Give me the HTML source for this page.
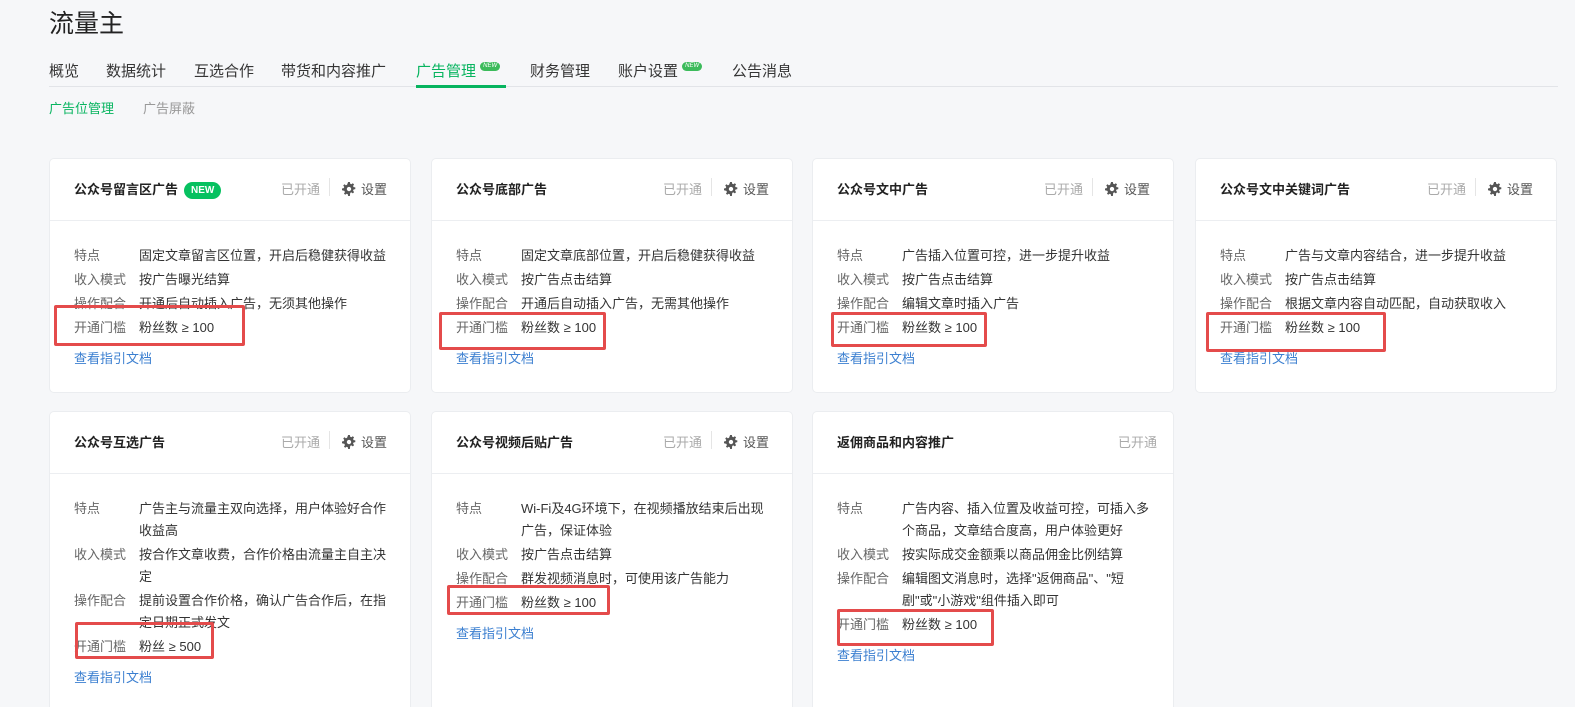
<!DOCTYPE html>
<html style="width:1575px;height:707px;overflow:hidden"><head><meta charset="utf-8"><style>
*{box-sizing:border-box;margin:0;padding:0}
body{width:1575px;height:707px;overflow:hidden;background:#f6f7f9;font-family:"Liberation Sans","Noto Sans CJK SC",sans-serif;color:#333;position:relative}
.h1{position:absolute;left:49px;top:4px;font-size:25px;color:#222}
.nav{position:absolute;left:49px;top:60px;font-size:15px;color:#353535;white-space:nowrap}
.nav span{position:absolute;top:0}
.navline{position:absolute;left:49px;right:17px;top:86px;height:1px;background:#e2e4e8}
.act{color:#07b45f}
.bar{position:absolute;left:416px;top:85px;width:90px;height:3px;background:#07b45f}
.new{display:inline-block;background:#3cbb5b;color:#fff;font-size:6px;border-radius:5px;padding:0 3px;line-height:9px;vertical-align:top;margin-top:2px}
.sub{position:absolute;top:98px;font-size:13px}
.card{position:absolute;width:362px;background:#fff;border-radius:5px;border:1px solid #ebedf0;overflow:hidden}
.hd{height:62px;border-bottom:1px solid #eceef1;position:relative}
.t{position:absolute;left:24px;top:20px;font-size:13px;font-weight:bold;color:#222}
.badge{display:inline-block;background:#07c160;color:#fff;font-size:10px;font-weight:bold;border-radius:9px;padding:0 7px;line-height:17px;margin-left:6px;vertical-align:1px}
.st{position:absolute;right:90px;top:20px;font-size:13px;color:#aaa}
.st.only{right:16px}
.sep{position:absolute;right:80px;top:19px;width:1px;height:18px;background:#e5e5e5}
.set{position:absolute;right:23px;top:20px;font-size:13px;color:#555}
.set svg{vertical-align:-2px;margin-right:5px}
.bd{padding:24px 24px 0 24px;font-size:13px}
.r{display:flex;line-height:22px;margin-bottom:2px}
.r .l{width:65px;flex:none;color:#666}
.r .v{color:#333}
.lk{color:#3b7fd0;font-size:13px;margin-top:9px;line-height:22px}
.red{position:absolute;border:3px solid #e44b4b;border-radius:2px}
</style></head><body>
<div class="h1">流量主</div>
<div class="nav">
<span style="left:0">概览</span>
<span style="left:57px">数据统计</span>
<span style="left:145px">互选合作</span>
<span style="left:232px">带货和内容推广</span>
<span style="left:367px" class="act">广告管理 <i class="new">NEW</i></span>
<span style="left:481px">财务管理</span>
<span style="left:569px">账户设置 <i class="new">NEW</i></span>
<span style="left:683px">公告消息</span>
</div>
<div class="navline"></div><div class="bar"></div>
<div class="sub act" style="left:49px">广告位管理</div>
<div class="sub" style="left:143px;color:#999">广告屏蔽</div>

<svg width="0" height="0" style="position:absolute"><defs><g id="gear"><path fill="#555" d="M7 0h2l.4 2a5 5 0 011.3.6l1.7-1.2 1.4 1.4-1.2 1.7a5 5 0 01.6 1.3l2 .4v2l-2 .4a5 5 0 01-.6 1.3l1.2 1.7-1.4 1.4-1.7-1.2a5 5 0 01-1.3.6L9 16H7l-.4-2a5 5 0 01-1.3-.6l-1.7 1.2-1.4-1.4 1.2-1.7A5 5 0 012.8 10.2L0 9.4V7.4l2-.4a5 5 0 01.6-1.3L1.4 4 2.8 2.6l1.7 1.2A5 5 0 015.8 3.2zM8 5.5a2.5 2.5 0 100 5 2.5 2.5 0 000-5z"/></g></defs></svg>

<div class="card" style="left:49px;top:158px;height:235px"><div class="hd"><div class="t">公众号留言区广告<span class="badge">NEW</span></div><div class="st">已开通</div><div class="sep"></div><div class="set"><svg width="14" height="14" viewBox="0 0 16 16"><use href="#gear"/></svg>设置</div></div>
<div class="bd"><div class="r"><span class="l">特点</span><span class="v">固定文章留言区位置，开启后稳健获得收益</span></div><div class="r"><span class="l">收入模式</span><span class="v">按广告曝光结算</span></div><div class="r"><span class="l">操作配合</span><span class="v">开通后自动插入广告，无须其他操作</span></div><div class="r"><span class="l">开通门槛</span><span class="v">粉丝数 ≥ 100</span></div><div class="lk">查看指引文档</div></div></div>

<div class="card" style="left:431px;top:158px;height:235px"><div class="hd"><div class="t">公众号底部广告</div><div class="st">已开通</div><div class="sep"></div><div class="set"><svg width="14" height="14" viewBox="0 0 16 16"><use href="#gear"/></svg>设置</div></div>
<div class="bd"><div class="r"><span class="l">特点</span><span class="v">固定文章底部位置，开启后稳健获得收益</span></div><div class="r"><span class="l">收入模式</span><span class="v">按广告点击结算</span></div><div class="r"><span class="l">操作配合</span><span class="v">开通后自动插入广告，无需其他操作</span></div><div class="r"><span class="l">开通门槛</span><span class="v">粉丝数 ≥ 100</span></div><div class="lk">查看指引文档</div></div></div>

<div class="card" style="left:812px;top:158px;height:235px"><div class="hd"><div class="t">公众号文中广告</div><div class="st">已开通</div><div class="sep"></div><div class="set"><svg width="14" height="14" viewBox="0 0 16 16"><use href="#gear"/></svg>设置</div></div>
<div class="bd"><div class="r"><span class="l">特点</span><span class="v">广告插入位置可控，进一步提升收益</span></div><div class="r"><span class="l">收入模式</span><span class="v">按广告点击结算</span></div><div class="r"><span class="l">操作配合</span><span class="v">编辑文章时插入广告</span></div><div class="r"><span class="l">开通门槛</span><span class="v">粉丝数 ≥ 100</span></div><div class="lk">查看指引文档</div></div></div>

<div class="card" style="left:1195px;top:158px;height:235px"><div class="hd"><div class="t">公众号文中关键词广告</div><div class="st">已开通</div><div class="sep"></div><div class="set"><svg width="14" height="14" viewBox="0 0 16 16"><use href="#gear"/></svg>设置</div></div>
<div class="bd"><div class="r"><span class="l">特点</span><span class="v">广告与文章内容结合，进一步提升收益</span></div><div class="r"><span class="l">收入模式</span><span class="v">按广告点击结算</span></div><div class="r"><span class="l">操作配合</span><span class="v">根据文章内容自动匹配，自动获取收入</span></div><div class="r"><span class="l">开通门槛</span><span class="v">粉丝数 ≥ 100</span></div><div class="lk">查看指引文档</div></div></div>

<div class="card" style="left:49px;top:411px;height:296px;border-bottom:none;border-radius:5px 5px 0 0"><div class="hd"><div class="t">公众号互选广告</div><div class="st">已开通</div><div class="sep"></div><div class="set"><svg width="14" height="14" viewBox="0 0 16 16"><use href="#gear"/></svg>设置</div></div>
<div class="bd"><div class="r"><span class="l">特点</span><span class="v">广告主与流量主双向选择，用户体验好合作收益高</span></div><div class="r"><span class="l">收入模式</span><span class="v">按合作文章收费，合作价格由流量主自主决定</span></div><div class="r"><span class="l">操作配合</span><span class="v">提前设置合作价格，确认广告合作后，在指定日期正式发文</span></div><div class="r"><span class="l">开通门槛</span><span class="v">粉丝 ≥ 500</span></div><div class="lk">查看指引文档</div></div></div>

<div class="card" style="left:431px;top:411px;height:296px;border-bottom:none;border-radius:5px 5px 0 0"><div class="hd"><div class="t">公众号视频后贴广告</div><div class="st">已开通</div><div class="sep"></div><div class="set"><svg width="14" height="14" viewBox="0 0 16 16"><use href="#gear"/></svg>设置</div></div>
<div class="bd"><div class="r"><span class="l">特点</span><span class="v">Wi-Fi及4G环境下，在视频播放结束后出现广告，保证体验</span></div><div class="r"><span class="l">收入模式</span><span class="v">按广告点击结算</span></div><div class="r"><span class="l">操作配合</span><span class="v">群发视频消息时，可使用该广告能力</span></div><div class="r"><span class="l">开通门槛</span><span class="v">粉丝数 ≥ 100</span></div><div class="lk">查看指引文档</div></div></div>

<div class="card" style="left:812px;top:411px;height:296px;border-bottom:none;border-radius:5px 5px 0 0"><div class="hd"><div class="t">返佣商品和内容推广</div><div class="st only">已开通</div></div>
<div class="bd"><div class="r"><span class="l">特点</span><span class="v">广告内容、插入位置及收益可控，可插入多个商品，文章结合度高，用户体验更好</span></div><div class="r"><span class="l">收入模式</span><span class="v">按实际成交金额乘以商品佣金比例结算</span></div><div class="r"><span class="l">操作配合</span><span class="v">编辑图文消息时，选择"返佣商品"、"短剧"或"小游戏"组件插入即可</span></div><div class="r"><span class="l">开通门槛</span><span class="v">粉丝数 ≥ 100</span></div><div class="lk">查看指引文档</div></div></div>

<div class="red" style="left:54px;top:305px;width:191px;height:41px"></div>
<div class="red" style="left:439px;top:312px;width:167px;height:38px"></div>
<div class="red" style="left:831px;top:312px;width:156px;height:35px"></div>
<div class="red" style="left:1206px;top:312px;width:180px;height:40px"></div>
<div class="red" style="left:75px;top:622px;width:139px;height:37px"></div>
<div class="red" style="left:447px;top:585px;width:163px;height:30px"></div>
<div class="red" style="left:837px;top:609px;width:157px;height:37px"></div>
</body></html>
